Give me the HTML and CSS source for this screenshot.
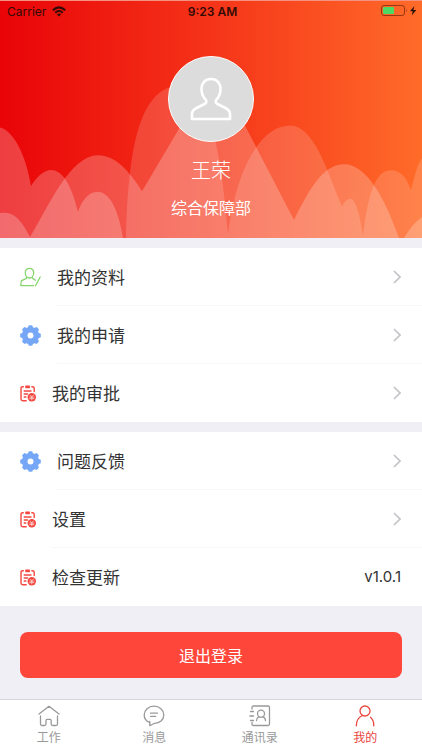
FILE: index.html
```html
<!DOCTYPE html>
<html lang="zh-CN">
<head>
<meta charset="utf-8">
<meta name="viewport" content="width=device-width, initial-scale=1">
<title>我的</title>
<link rel="stylesheet" href="styles.css">
</head>
<body>
<svg class="defs" width="0" height="0" aria-hidden="true">
  <symbol id="gear" viewBox="0 0 21 21">
    <g fill="#76a7f6">
      <path fill-rule="evenodd" d="M10.500 1.800a8.700 8.700 0 1 0 0 17.400a8.700 8.700 0 1 0 0-17.400zM10.500 7.500a3 3 0 1 1 0 6a3 3 0 1 1 0-6z"/>
      <g id="teeth">
        <rect x="8.300" y="0.200" width="4.400" height="4" rx="1.300"/>
        <rect x="8.300" y="16.800" width="4.400" height="4" rx="1.300"/>
        <rect x="0.200" y="8.300" width="4" height="4.400" rx="1.300"/>
        <rect x="16.800" y="8.300" width="4" height="4.400" rx="1.300"/>
      </g>
      <use href="#teeth" transform="rotate(45 10.500 10.500)"/>
    </g>
  </symbol>
  <symbol id="bill" viewBox="0 0 16 17">
    <g fill="none" stroke="#f4473f" stroke-width="1.400" stroke-linecap="round">
      <path d="M3.300 1.700H2.800Q1 1.700 1 3.400V14Q1 15.700 2.800 15.700H6.200M11.800 1.700H12.400Q14.200 1.700 14.200 3.400V6.500"/>
      <path d="M5.800 1.300H9.400M5.800 2.600H9.400" stroke-width="1.400"/>
      <path d="M4.200 6H11M4.200 9H7.500M4.200 12H5.800"/>
    </g>
    <circle cx="11.800" cy="12.300" r="4.200" fill="#f4473f"/>
    <path d="M10 9.800L11.800 12L13.600 9.800M9.300 12.100H14.300M9.300 13.600H14.300M11.800 12V15.200" fill="none" stroke="#fff" stroke-width=".6"/>
  </symbol>
  <symbol id="chevron" viewBox="0 0 8 14">
    <path d="M1 1L7 7L1 13" fill="none" stroke="#c4c4c8" stroke-width="1.700"/>
  </symbol>
</svg>

<div class="app">
  <header class="profile">
    <svg class="waves" viewBox="0 0 422 238" preserveAspectRatio="none" aria-hidden="true">
      <path class="wave-soft" d="M126 238C127 190 131 145 142 118C149 101 160 84 184 84C204 84 220 132 228 234C238 160 264 125 290 125C315 125 329 176 342 206C350 193 357 194 363 236C369 185 378 170 391 170C401 170 407 178 411 190C415 174 418 163 422 158V238Z"/>
      <path class="wave" d="M0 213C12 211 20 217 30 237C49 206 70 155 98 155C116 155 130 172 142 191L178 130C190 104 198 92 211 92C228 92 236 107 246 127L294 220C308 192 322 164 344 164C366 164 384 196 399 238H404Q413 223 422 217V238H0Z"/>
      <path class="wave" d="M0 127C13 130 26 154 31 186C44 164 65 157 78 212C85 187 113 174 123 238H0Z"/>
    </svg>
    <div class="status">
      <div class="status-side">
        <span>Carrier</span>
        <svg width="14" height="11" viewBox="0 0 14 11" aria-label="Wi-Fi"><g fill="none" stroke="#330b05" stroke-width="2"><path d="M.8 4.200Q7-1.500 13.200 4.200"/><path d="M3.200 6.700Q7 3.200 10.800 6.700"/></g><path d="M4.800 8.300Q7 6.500 9.200 8.300L7 10.600Z" fill="#330b05"/></svg>
      </div>
      <time class="clock">9:23 AM</time>
      <div class="status-side status-end">
        <svg width="37" height="12" viewBox="0 0 37 12" aria-label="电池充电中"><rect x=".5" y=".5" width="23" height="10" rx="2.500" fill="none" stroke="#983813"/><rect x="2" y="2" width="11" height="7" rx="1" fill="#4cd964"/><path d="M25 4Q26.500 5.500 25 7.300Z" fill="#983813"/><path d="M33.300 1L29 6.300H31.800L30.700 10.500L35.300 4.900H32.400Z" fill="#26100a"/></svg>
      </div>
    </div>
    <div class="avatar">
      <svg width="42" height="44" viewBox="0 0 42 44" aria-hidden="true"><path d="M21 2C15 2 11.500 6.300 11.500 12C11.500 17 13 20 15.500 22.500C17 24 16.500 26 14.500 27L6.500 31C3 32.800 2 34.500 2 37V42H40V37C40 34.500 39 32.800 35.500 31L27.500 27C25.500 26 25 24 26.500 22.500C29 20 30.500 17 30.500 12C30.500 6.300 27 2 21 2Z" fill="none" stroke="#fff" stroke-width="2.600" stroke-linejoin="round"/></svg>
    </div>
    <h1 class="name">王荣</h1>
    <p class="department">综合保障部</p>
  </header>

  <main class="content">
    <nav class="group">
      <a class="row" href="#profile">
        <svg class="icon" viewBox="0 0 21 21" aria-hidden="true"><g fill="none" stroke="#86d66c" stroke-width="1.300" stroke-linecap="round" stroke-linejoin="round"><path d="M9.500 1.300C7 1.300 5.300 3 5.300 5.500C5.300 8.500 7 11 9.500 11S13.700 8.500 13.700 5.500C13.700 3 12 1.300 9.500 1.300Z"/><path d="M6.800 10.500C7 12 3 12.300 1.700 13.700C1 14.700.8 16 .8 18.700H13.500M12.200 10.500C12.200 12 14.500 12 15.300 13.300"/><path d="M20.200 10L15.500 18.700"/></g></svg>
        <span class="cell">我的资料<svg class="chevron" aria-hidden="true"><use href="#chevron"/></svg></span>
      </a>
      <a class="row" href="#requests">
        <svg class="icon" aria-hidden="true"><use href="#gear"/></svg>
        <span class="cell">我的申请<svg class="chevron" aria-hidden="true"><use href="#chevron"/></svg></span>
      </a>
      <a class="row" href="#approvals">
        <svg class="icon icon-small" aria-hidden="true"><use href="#bill"/></svg>
        <span class="cell">我的审批<svg class="chevron" aria-hidden="true"><use href="#chevron"/></svg></span>
      </a>
    </nav>
    <nav class="group">
      <a class="row" href="#feedback">
        <svg class="icon" aria-hidden="true"><use href="#gear"/></svg>
        <span class="cell">问题反馈<svg class="chevron" aria-hidden="true"><use href="#chevron"/></svg></span>
      </a>
      <a class="row" href="#settings">
        <svg class="icon icon-small" aria-hidden="true"><use href="#bill"/></svg>
        <span class="cell">设置<svg class="chevron" aria-hidden="true"><use href="#chevron"/></svg></span>
      </a>
      <a class="row" href="#update">
        <svg class="icon icon-small" aria-hidden="true"><use href="#bill"/></svg>
        <span class="cell">检查更新<span class="version">v1.0.1</span></span>
      </a>
    </nav>
    <button class="logout" type="button">退出登录</button>
  </main>

  <nav class="tabs">
    <a class="tab" href="#work">
      <svg width="22" height="22" viewBox="0 0 22 22" aria-hidden="true"><path d="M1 9L11 1.300L21 9M2.500 11V19Q2.500 20.500 4 20.500H6.500Q8 20.500 8 19V15.500Q8 14.300 9.200 14.300H12Q13.200 14.300 13.200 15.500V19Q13.200 20.500 14.700 20.500H18Q19.500 20.500 19.500 19V11"/></svg>
      <span>工作</span>
    </a>
    <a class="tab" href="#messages">
      <svg width="22" height="22" viewBox="0 0 22 22" aria-hidden="true"><path d="M6.500 17.500C3 16 1.200 13.300 1.200 10C1.200 5 5.500 1.200 11 1.200S20.800 5 20.800 10S16.500 18.300 11.500 18.300L6.800 20.800V16.500M7.500 8.200H14.500M7.500 11.300H12.700"/></svg>
      <span>消息</span>
    </a>
    <a class="tab" href="#contacts">
      <svg width="22" height="22" viewBox="0 0 22 22" aria-hidden="true"><path d="M3 4V2.500Q3 1 4.500 1H19Q20.500 1 20.500 2.500V19Q20.500 20.500 19 20.500H4.500Q3 20.500 3 19V17.500M1.500 6.500H4.500M.8 11H4.500M1.500 15.500H4.500M7.500 15.500Q7.800 12.500 10 11.800M16.500 15.500Q16.300 12.500 14 11.800"/><circle cx="12" cy="8.700" r="3.500"/></svg>
      <span>通讯录</span>
    </a>
    <a class="tab tab-active" href="#me" aria-current="page">
      <svg width="22" height="22" viewBox="0 0 22 22" aria-hidden="true"><circle cx="11" cy="6" r="5"/><path d="M8.500 10.500C4 12.500 2.300 16 2.300 20.800M16.500 12.300C19 14.300 19.800 17 19.800 20.800"/></svg>
      <span>我的</span>
    </a>
  </nav>
</div>
</body>
</html>
```
FILE: styles.css
```css
* {
  box-sizing: border-box;
}

body {
  margin: 0;
  background: #efeff5;
  color: #333;
  font-family: Inter, "Noto Sans CJK SC", sans-serif;
}

a {
  color: inherit;
  text-decoration: none;
}

svg {
  display: block;
  flex: none;
}

.defs {
  position: absolute;
}

.app {
  display: flex;
  flex-direction: column;
  min-height: 100vh;
}

.profile {
  position: relative;
  display: flex;
  flex-direction: column;
  align-items: center;
  padding-bottom: 18px;
  background: linear-gradient(90deg, #e90408 0%, #f53419 50%, #ff6b29 100%);
  border-top: 1px solid #f59180;
  color: #fff;
}

.waves {
  position: absolute;
  inset: 0;
  width: 100%;
  height: 100%;
}

.wave {
  fill: rgba(255, 255, 255, 0.23);
}

.wave-soft {
  fill: rgba(255, 255, 255, 0.16);
}

.status {
  position: relative;
  display: flex;
  align-items: center;
  align-self: stretch;
  height: 20px;
  padding: 0 4px 0 7px;
  color: #330b05;
  font-size: 12px;
}

.status-side {
  display: flex;
  flex: 1;
  align-items: center;
  gap: 6px;
}

.status-end {
  justify-content: flex-end;
}

.clock {
  font-weight: 600;
}

.avatar {
  position: relative;
  display: flex;
  align-items: center;
  justify-content: center;
  width: 86px;
  height: 86px;
  margin-top: 35px;
  background: #dcdcdc;
  border: 1px solid #fff;
  border-radius: 50%;
}

.name {
  position: relative;
  margin: 14px 0 0;
  font-size: 20px;
  font-weight: 300;
  line-height: 30px;
}

.department {
  position: relative;
  margin: 10px 0 0;
  font-size: 16px;
  line-height: 24px;
}

.content {
  display: flex;
  flex: 1;
  flex-direction: column;
  gap: 10px;
  padding: 10px 0 21px;
}

.group {
  background: #fff;
}

.row {
  display: flex;
  align-items: center;
  gap: 16px;
  height: 58px;
  padding-left: 20px;
  font-size: 17px;
}

.icon {
  width: 21px;
  height: 21px;
}

.icon-small {
  width: 16px;
  height: 17px;
}

.cell {
  display: flex;
  flex: 1;
  align-items: center;
  justify-content: space-between;
  height: 58px;
  padding-right: 21px;
  border-bottom: 1px solid #f7f7f9;
}

.row:last-child .cell {
  border-bottom-color: transparent;
}

.chevron {
  width: 8px;
  height: 14px;
}

.version {
  font-size: 15px;
}

.logout {
  height: 46px;
  margin: 16px 20px 0;
  background: #ff463a;
  border: 0;
  border-radius: 8px;
  color: #fff;
  font-family: inherit;
  font-size: 16px;
}

.tabs {
  display: grid;
  grid-template-columns: repeat(4, 1fr);
  height: 51px;
  background: #fff;
  border-top: 1px solid #d6d6da;
}

.tab {
  display: flex;
  flex-direction: column;
  align-items: center;
  gap: 2px;
  padding: 5px 8px 0 0;
  color: #999;
  font-size: 12px;
  line-height: 18px;
}

.tab svg {
  fill: none;
  stroke: currentColor;
  stroke-width: 1.3;
  stroke-linecap: round;
  stroke-linejoin: round;
}

.tab-active {
  color: #e9463d;
}
```
